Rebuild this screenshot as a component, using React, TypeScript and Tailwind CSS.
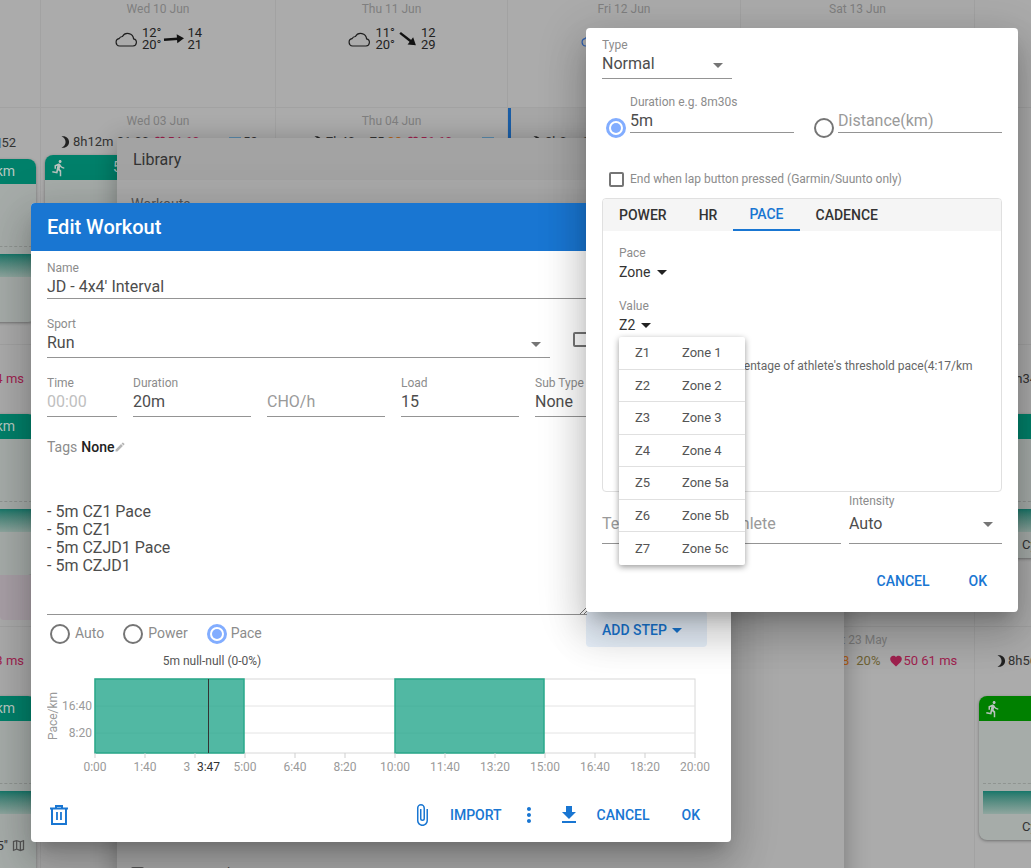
import React from "react";
import {
  MdArrowDropDown,
  MdAttachFile,
  MdBrightness3,
  MdDirectionsRun,
  MdEdit,
  MdFavorite,
  MdFileDownload,
  MdMoreVert,
  MdOutlineMap,
} from "react-icons/md";

const Cloud = ({ blue }: { blue?: boolean }) => (
  <svg width="24" height="16" viewBox="0 0 24 16" fill="none" stroke={blue ? "#2f5fb0" : "#1d1d1d"} strokeWidth="1.2">
    <path d="M5.5 15h13.5a3.6 3.6 0 0 0 .6-7.1 6 6 0 0 0-11.2-2.4 4 4 0 0 0-3.4 2.2 3.7 3.7 0 0 0 .5 7.3z" />
  </svg>
);

const Arrow = ({ angle }: { angle: number }) => (
  <svg width="22" height="16" viewBox="0 0 22 16" style={{ transform: `rotate(${angle}deg)` }}>
    <path d="M1 8h14" stroke="#111" strokeWidth="2.4" />
    <path d="M14 3.5 21 8l-7 4.5z" fill="#111" />
  </svg>
);

const Weather = ({ a, b, c, d, angle, blue }: { a: string; b: string; c: string; d: string; angle: number; blue?: boolean }) => (
  <div className="mt-[10px] flex h-[26px] items-center justify-center text-[13px] leading-[12px] text-[#222]">
    <Cloud blue={blue} />
    <div className="ml-[4px] flex flex-col">
      <span>{a}</span>
      <span>{b}</span>
    </div>
    <div className="mx-[2px]">
      <Arrow angle={angle} />
    </div>
    <div className="flex flex-col">
      <span>{c}</span>
      <span>{d}</span>
    </div>
  </div>
);

const DateLabel = ({ children }: { children: React.ReactNode }) => (
  <div className="pt-[2px] text-center text-[12px] leading-[14px] text-[#7f7f7f]">{children}</div>
);

const WeekDate = ({ children }: { children: React.ReactNode }) => (
  <div className="pt-[6px] text-center text-[12px] leading-[14px] text-[#7f7f7f]">{children}</div>
);

const Metrics = ({ sleep, extra, hr, blue, pad }: { sleep: string; extra?: string; hr: string; blue: string; pad: string }) => (
  <div className={`${pad} mt-[6px] flex h-[16px] items-center whitespace-nowrap text-[13px] leading-[16px] text-[#333]`}>
    <MdBrightness3 size={14} className="shrink-0 text-[#222]" />
    <span className="ml-[1px]">{sleep}</span>
    {extra && <span className="ml-[3px] text-[#b8651a]">{extra}</span>}
    <MdFavorite size={14} className="ml-[4px] shrink-0 text-[#a0224f]" />
    <span className="text-[#a0224f]">{hr}</span>
    <span className="ml-[8px] h-[10px] w-[12px] shrink-0 bg-[#5b8cae]" />
    <span className="ml-[2px]">{blue}</span>
  </div>
);

const Card = ({ green, label, labelClass, width, height, children }: { green?: boolean; label?: string; labelClass?: string; width: string; height: string; children?: React.ReactNode }) => (
  <div className={`${width} ${height} shrink-0 overflow-hidden rounded-[8px] bg-[#a6aca9] shadow-[0_1px_3px_rgba(0,0,0,0.35)]`}>
    <div className={`flex h-[25px] items-center px-[5px] text-[14px] ${green ? "bg-[#008000]" : "bg-[#00806a]"}`}>
      <MdDirectionsRun size={18} className="shrink-0 text-[#b9c2be]" />
      <span className={`${labelClass} whitespace-nowrap text-[#b8c8c2]`}>{label}</span>
    </div>
    <div className="mx-[4px] mt-[62px] border-t border-dashed border-[#8f9491]" />
    <div className="mx-[4px] mt-[7px] h-[23px] bg-gradient-to-b from-[#13776a] to-[#8fa69f]" />
    {children}
  </div>
);

const Radio = ({ checked }: { checked?: boolean }) =>
  checked ? (
    <span className="flex h-5 w-5 shrink-0 items-center justify-center rounded-full border-[3px] border-[#82adff]">
      <span className="h-[10px] w-[10px] rounded-full bg-[#82adff]" />
    </span>
  ) : (
    <span className="block h-5 w-5 shrink-0 rounded-full border-2 border-[#757575]" />
  );

const Field = ({ label, value, w, muted, faint, top }: { label?: string; value: string; w: string; muted?: boolean; faint?: boolean; top?: string }) => (
  <div className={`${w} ${top ?? ""} h-[41px] shrink-0 overflow-hidden border-b border-[#949494]`}>
    <div className="h-[14px] text-[12px] leading-[14px] text-[#8c8c8c]">{label}</div>
    <div className={`mt-[1px] text-[16px] leading-[22px] ${faint ? "text-[#c0c0c0]" : muted ? "text-[#9a9a9a]" : "text-[#4d4d4d]"}`}>{value}</div>
  </div>
);

const SelectCaret = () => <MdArrowDropDown size={24} className="absolute right-[2px] top-[15px] text-[#757575]" />;

const TrashIcon = () => (
  <svg width="18" height="20" viewBox="0 0 18 20" fill="none" stroke="#1976d2" strokeWidth="2">
    <path d="M0 3.5h18M6 3V1h6v2" />
    <path d="M2 3.5V19h14V3.5" />
    <path d="M7 7v8M11 7v8" strokeWidth="1.8" />
  </svg>
);

const ticks = ["0:00", "1:40", "3:20", "5:00", "6:40", "8:20", "10:00", "11:40", "13:20", "15:00", "16:40", "18:20", "20:00"];

const Chart = () => (
  <svg width="668" height="130" viewBox="0 0 668 130" className="mt-[4px] block" fontFamily="Roboto, sans-serif">
    <text x="165" y="14" fontSize="12" textAnchor="middle" fill="#555">5m null-null (0-0%)</text>
    <rect x="48" y="28" width="600" height="74" fill="#fff" stroke="#d8d8d8" />
    <path d="M48 55h600M48 82h600" stroke="#e4e4e4" />
    <rect x="48" y="28" width="149" height="74" fill="#26a68c" fillOpacity="0.8" stroke="#2aa98b" strokeWidth="1.5" />
    <rect x="348" y="28" width="149" height="74" fill="#26a68c" fillOpacity="0.8" stroke="#2aa98b" strokeWidth="1.5" />
    <path d="M161.5 28v74" stroke="#333" />
    {ticks.map((t, i) => (
      <g key={t}>
        <path d={`M${48 + i * 50} 102v5`} stroke="#cfcfcf" />
        <text x={48 + i * 50} y="120" fontSize="12" textAnchor="middle" fill="#9a9a9a">{t}</text>
      </g>
    ))}
    <rect x="143" y="108" width="36" height="16" fill="#fff" />
    <text x="161.5" y="120" fontSize="12" textAnchor="middle" fill="#333">3:47</text>
    <text x="45" y="59" fontSize="12" textAnchor="end" fill="#9a9a9a">16:40</text>
    <text x="45" y="86" fontSize="12" textAnchor="end" fill="#9a9a9a">8:20</text>
    <text x="10" y="65" fontSize="12" textAnchor="middle" fill="#9a9a9a" transform="rotate(-90 10 65)">Pace/km</text>
  </svg>
);

const zones = [
  ["Z1", "Zone 1"],
  ["Z2", "Zone 2"],
  ["Z3", "Zone 3"],
  ["Z4", "Zone 4"],
  ["Z5", "Zone 5a"],
  ["Z6", "Zone 5b"],
  ["Z7", "Zone 5c"],
];

const dialogShadow = "shadow-[0_11px_15px_-7px_rgba(0,0,0,0.2),0_24px_38px_3px_rgba(0,0,0,0.14),0_9px_46px_8px_rgba(0,0,0,0.12)]";

export default function App() {
  return (
    <div className="relative h-[868px] w-[1031px] overflow-hidden bg-[#ababab] font-['Roboto',sans-serif]">
      {/* dimmed calendar behind the dialogs */}
      <div className="grid h-full grid-cols-[41px_235px_232px_233px_234px_56px] grid-rows-[108px_237px_282px_241px]">
        {/* week of 8 Jun */}
        <div className="border-b border-r border-[#a2a2a2]" />
        <div className="border-b border-r border-[#a2a2a2]">
          <DateLabel>Wed 10 Jun</DateLabel>
          <Weather a="12°" b="20°" c="14" d="21" angle={-4} />
        </div>
        <div className="border-b border-r border-[#a2a2a2]">
          <DateLabel>Thu 11 Jun</DateLabel>
          <Weather a="11°" b="20°" c="12" d="29" angle={38} />
        </div>
        <div className="border-b border-r border-[#a2a2a2]">
          <DateLabel>Fri 12 Jun</DateLabel>
          <Weather a="11°" b="19°" c="10" d="26" angle={0} blue />
        </div>
        <div className="border-b border-r border-[#a2a2a2]">
          <DateLabel>Sat 13 Jun</DateLabel>
          <Weather a="12°" b="21°" c="11" d="24" angle={0} />
        </div>
        <div className="border-b border-[#a2a2a2]" />

        {/* week of 1 Jun */}
        <div className="overflow-hidden border-b border-r border-[#a2a2a2]">
          <div className="mt-[27px] flex h-[16px] items-center justify-end text-[13px] text-[#333]">
            <span className="mr-[1px] h-[10px] w-[4px] bg-[#5b8cae]" />
            <span className="mr-[24px]">52</span>
          </div>
          <div className="mt-[8px] flex justify-end pr-[4px]">
            <Card width="w-[90px]" height="h-[163px]" label="km" labelClass="ml-auto mr-[16px]" />
          </div>
        </div>
        <div className="overflow-hidden border-b border-r border-[#a2a2a2]">
          <WeekDate>Wed 03 Jun</WeekDate>
          <Metrics pad="pl-[17px]" sleep="8h12m 81 00" hr="54 60 ms" blue="52" />
          <div className="mt-[5px] pl-[4px]">
            <Card width="w-[190px]" height="h-[163px]" label="5.50 km" labelClass="ml-[45px]" />
          </div>
        </div>
        <div className="border-b border-r border-[#a2a2a2]">
          <WeekDate>Thu 04 Jun</WeekDate>
          <Metrics pad="pl-[35px]" sleep="7h40m 75" extra="88" hr="56 60 ms" blue="" />
        </div>
        <div className="border-b border-r border-[#a2a2a2] border-l-[3px] border-l-[#1a5da5] bg-[#a6a6a6]">
          <WeekDate>Fri 05 Jun</WeekDate>
          <Metrics pad="pl-[19px]" sleep="8h0m 60" hr="" blue="" />
        </div>
        <div className="border-b border-r border-[#a2a2a2]" />
        <div className="border-b border-[#a2a2a2]" />

        {/* week of 25 May */}
        <div className="overflow-hidden border-b border-r border-[#a2a2a2]">
          <div className="mt-[26px] flex h-[16px] justify-end whitespace-nowrap text-[13px] leading-[16px] text-[#a0224f]">
            <span className="mr-[16px] shrink-0">4 ms</span>
          </div>
          <div className="mt-[27px] flex justify-end pr-[4px]">
            <Card width="w-[90px]" height="h-[161px]" label="km" labelClass="ml-auto mr-[16px]" />
          </div>
          <div className="flex h-[45px] justify-end pr-[4px]">
            <div className="w-[90px] rounded-b-[4px] bg-[#a89fa6]" />
          </div>
        </div>
        <div className="border-b border-r border-[#a2a2a2]" />
        <div className="border-b border-r border-[#a2a2a2]" />
        <div className="border-b border-r border-[#a2a2a2]" />
        <div className="border-b border-r border-[#a2a2a2]" />
        <div className="overflow-hidden border-b border-[#a2a2a2]">
          <div className="mt-[26px] h-[16px] whitespace-nowrap pl-[33px] text-[13px] leading-[16px] text-[#333]">8h34m</div>
          <div className="mt-[27px] pl-[4px]">
            <Card width="w-[230px]" height="h-[144px]">
              <div className="pl-[43px] pt-[3px] text-[13px] text-[#333]">Cycling</div>
            </Card>
          </div>
        </div>

        {/* week of 18 May */}
        <div className="overflow-hidden border-r border-[#a2a2a2]">
          <div className="mt-[26px] flex h-[16px] justify-end whitespace-nowrap text-[13px] leading-[16px] text-[#a0224f]">
            <span className="mr-[16px] shrink-0">3 ms</span>
          </div>
          <div className="mt-[27px] flex justify-end pr-[4px]">
            <Card width="w-[90px]" height="h-[190px]" label="km" labelClass="ml-auto mr-[16px]">
              <div className="flex items-center justify-end gap-[3px] pr-[10px] pt-[22px] text-[13px] text-[#333]">
                <span>5"</span>
                <MdOutlineMap size={15} className="text-[#555]" />
              </div>
            </Card>
          </div>
        </div>
        <div className="border-r border-[#a2a2a2]" />
        <div className="border-r border-[#a2a2a2]" />
        <div className="border-r border-[#a2a2a2]" />
        <div className="border-r border-[#a2a2a2]">
          <WeekDate>Sat 23 May</WeekDate>
          <div className="mt-[6px] flex h-[16px] items-center whitespace-nowrap pl-[101px] text-[13px] leading-[16px]">
            <span className="text-[#b8651a]">8</span>
            <span className="ml-[7px] text-[#6f6436]">20%</span>
            <MdFavorite size={14} className="ml-[9px] text-[#a0224f]" />
            <span className="text-[#a0224f]">50 61 ms</span>
          </div>
        </div>
        <div className="overflow-hidden">
          <div className="mt-[26px] flex h-[16px] items-center whitespace-nowrap pl-[19px] text-[13px] text-[#333]">
            <MdBrightness3 size={14} className="shrink-0 text-[#222]" />
            <span>8h56m</span>
          </div>
          <div className="mt-[27px] pl-[4px]">
            <Card green width="w-[230px]" height="h-[144px]">
              <div className="pl-[43px] pt-[3px] text-[13px] text-[#333]">Cycling</div>
            </Card>
          </div>
        </div>
      </div>

      {/* library dialog */}
      <div className="absolute left-[117px] top-[138px] h-[760px] w-[727px] bg-[#a9a9a9] shadow-[0_4px_24px_rgba(0,0,0,0.3)]">
        <div className="flex h-[42px] items-center bg-[#a3a3a3] pl-[16px] pt-[1px] text-[16px] text-[#333]">Library</div>
        <div className="mt-[16px] pl-[14px] text-[14px] leading-[16px] text-[#555]">Workouts</div>
        <div className="mt-[653px] flex items-center gap-[5px] pl-[14px] text-[13px] leading-[16px] text-[#444]">
          <span className="h-[13px] w-[13px] rounded-[2px] border-2 border-[#555]" />
          Save as template
        </div>
      </div>

      {/* edit workout dialog */}
      <div className={`absolute left-[31px] top-[203px] h-[639px] w-[700px] overflow-hidden rounded-[4px] bg-white ${dialogShadow}`}>
        <div className="flex h-12 items-center bg-[#1976d2] pl-4 text-[20px] font-medium text-white">Edit Workout</div>
        <div className="px-4 pt-[7px]">
          <Field label="Name" value="JD - 4x4' Interval" w="w-[668px]" top="pt-[3px]" />
          <div className="mt-[18px] flex">
            <div className="relative">
              <Field label="Sport" value="Run" w="w-[503px]" />
              <SelectCaret />
            </div>
            <span className="ml-[23px] mt-[15px] h-[15px] w-[15px] rounded-[2px] border-2 border-[#757575]" />
          </div>
          <div className="mt-[18px] flex gap-4">
            <Field label="Time" value="00:00" w="w-[70px]" faint />
            <Field label="Duration" value="20m" w="w-[118px]" />
            <Field label="" value="CHO/h" w="w-[118px]" muted />
            <Field label="Load" value="15" w="w-[118px]" />
            <Field label="Sub Type" value="None" w="w-[118px]" />
          </div>
          <div className="mt-[20px] flex h-[20px] items-center text-[14px] text-[#8c8c8c]">
            Tags
            <span className="ml-[4px] font-medium text-[#222]">None</span>
            <MdEdit size={12} className="text-[#b5b5b5]" />
          </div>
          <div className="relative h-[158px] w-[540px] whitespace-pre-line border-b border-[#949494] pt-[46px] text-[16px] leading-[18px] text-[#4d4d4d]">
            {"- 5m CZ1 Pace\n- 5m CZ1\n- 5m CZJD1 Pace\n- 5m CZJD1"}
            <svg width="7" height="7" viewBox="0 0 7 7" className="absolute bottom-0 right-0" stroke="#777">
              <path d="M0 7 7 0M4 7l3-3" />
            </svg>
          </div>
          <div className="flex h-[32px] items-start justify-between pl-[3px] pr-[8px]">
            <div className="mt-[8px] flex items-center text-[14px] text-[#8c8c8c]">
              <Radio />
              <span className="ml-[5px]">Auto</span>
              <span className="ml-[19px]"><Radio /></span>
              <span className="ml-[5px]">Power</span>
              <span className="ml-[19px]"><Radio checked /></span>
              <span className="ml-[4px]">Pace</span>
            </div>
            <div className="-mt-1 flex h-9 w-[121px] items-end rounded-[4px] bg-[#e8f1fb] pb-[9px] pl-[16px] text-[14px] font-medium leading-[16px] text-[#1976d2]">
              ADD STEP
              <MdArrowDropDown size={24} className="-my-1 ml-[-2px]" />
            </div>
          </div>
          <Chart />
          <div className="mt-[14px] flex h-[40px] items-center pl-[3px] pr-[15px] text-[14px] font-medium text-[#1976d2]">
            <TrashIcon />
            <MdAttachFile size={24} className="ml-[342px]" />
            <span className="ml-[16px]">IMPORT</span>
            <MdMoreVert size={24} className="ml-[15px]" />
            <MdFileDownload size={24} className="ml-[16px]" />
            <span className="ml-[16px]">CANCEL</span>
            <span className="ml-[32px]">OK</span>
          </div>
        </div>
      </div>

      {/* step dialog */}
      <div className={`absolute left-[586px] top-[28px] h-[584px] w-[432px] rounded-[4px] bg-white px-4 pt-[10px] ${dialogShadow}`}>
        <div className="relative w-[130px]">
          <Field label="Type" value="Normal" w="w-[130px]" />
          <SelectCaret />
        </div>
        <div className="mt-[16px] flex h-[38px] items-start">
          <span className="ml-[4px] mt-[23px]"><Radio checked /></span>
          <div className="ml-[4px] h-[38px] w-[164px] border-b border-[#949494]">
            <div className="h-[14px] text-[12px] leading-[14px] text-[#8c8c8c]">Duration e.g. 8m30s</div>
            <div className="mt-[1px] text-[16px] leading-[22px] text-[#4d4d4d]">5m</div>
          </div>
          <span className="ml-[20px] mt-[23px]"><Radio /></span>
          <div className="ml-[4px] h-[38px] w-[164px] border-b border-[#949494] pt-[15px] text-[16px] leading-[22px] text-[#9a9a9a]">
            Distance(km)
          </div>
        </div>
        <div className="ml-[7px] mt-[38px] flex h-[16px] items-center text-[12px] text-[#8c8c8c]">
          <span className="h-[15px] w-[15px] rounded-[2px] border-2 border-[#757575]" />
          <span className="ml-[6px]">End when lap button pressed (Garmin/Suunto only)</span>
        </div>
        <div className="mt-[11px] h-[294px] overflow-hidden rounded-[4px] border border-[#e0e0e0]">
          <div className="flex h-[32px] bg-[#f5f5f5] text-[14px] font-medium text-[#333]">
            <div className="flex items-center px-4 pt-[1px]">POWER</div>
            <div className="flex items-center px-4 pt-[1px]">HR</div>
            <div className="flex items-center border-b-2 border-[#1976d2] px-4 pt-[1px] text-[#1976d2]">PACE</div>
            <div className="flex items-center px-4 pt-[1px]">CADENCE</div>
          </div>
          <div className="px-4 pt-[15px]">
            <div className="text-[12px] leading-[14px] text-[#8c8c8c]">Pace</div>
            <div className="mt-[2px] flex h-[20px] items-center text-[14px] text-[#333]">
              Zone
              <MdArrowDropDown size={24} className="-mr-[5px] text-[#222]" />
            </div>
            <div className="mt-[17px] text-[12px] leading-[14px] text-[#8c8c8c]">Value</div>
            <div className="mt-[2px] flex h-[20px] items-center text-[14px] text-[#333]">
              Z2
              <MdArrowDropDown size={24} className="-mx-[1px] text-[#222]" />
            </div>
            <div className="mt-[24px] whitespace-nowrap text-[12px] leading-[14px] text-[#666]">
              Target ranges as a percentage of athlete's threshold pace(4:17/km
            </div>
          </div>
        </div>
        <div className="mt-[2px] flex gap-[8px]">
          <div className="flex h-[50px] w-[239px] items-end border-b border-[#949494] pb-[8px] text-[16px] leading-[22px] text-[#9a9a9a]">
            Text to display to athlete
          </div>
          <div className="relative">
            <div className="h-[50px] w-[153px] border-b border-[#949494]">
              <div className="h-[14px] text-[12px] leading-[14px] text-[#8c8c8c]">Intensity</div>
              <div className="mt-[5px] text-[16px] leading-[22px] text-[#4d4d4d]">Auto</div>
            </div>
            <MdArrowDropDown size={24} className="absolute right-[2px] top-[18px] text-[#757575]" />
          </div>
        </div>
        <div className="mt-[20px] flex h-[34px] items-center justify-end gap-[39px] pr-[15px] text-[14px] font-medium text-[#1976d2]">
          <span>CANCEL</span>
          <span>OK</span>
        </div>

        {/* zone menu */}
        <div className="absolute left-[33px] top-[309px] w-[126px] rounded-[2px] bg-white shadow-[0_2px_6px_rgba(0,0,0,0.4)]">
          {zones.map(([z, n]) => (
            <div key={z} className="flex h-[32.5px] items-center border-b border-[#e0e0e0] pl-4 text-[13px] text-[#555] last:border-b-0">
              <span className="w-[47px]">{z}</span>
              <span>{n}</span>
            </div>
          ))}
        </div>
      </div>
    </div>
  );
}
